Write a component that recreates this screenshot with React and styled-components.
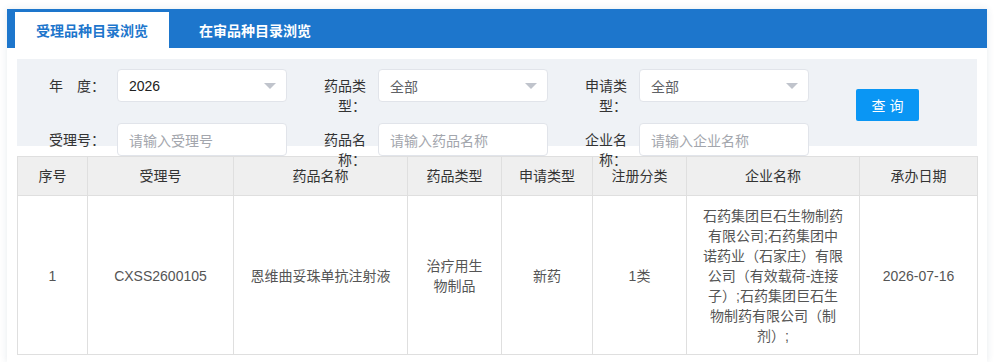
import React from "react";
import styled, { createGlobalStyle } from "styled-components";

const GlobalStyle = createGlobalStyle`
  html, body {
    margin: 0;
    padding: 0;
    background: #ffffff;
  }
  body {
    font-family: "Liberation Sans", "Noto Sans CJK SC", sans-serif;
    font-size: 14px;
    color: #333;
  }
`;

const BLUE = "#1d76cc";

const Panel = styled.div`
  width: 980px;
  height: calc(100vh - 9px);
  margin: 9px 0 0 7px;
  background: #fff;
  box-shadow: 0 0 7px rgba(40, 70, 110, 0.12);
`;

const TabBar = styled.div`
  display: flex;
  height: 39px;
  padding: 3px 0 0 8px;
  box-sizing: border-box;
  background: ${BLUE};
`;

const Tab = styled.div`
  width: 154px;
  height: 36px;
  margin-left: ${(p) => (p.$first ? 0 : 10)}px;
  display: flex;
  align-items: center;
  justify-content: ${(p) => (p.$active ? "center" : "flex-start")};
  padding-left: ${(p) => (p.$active ? 0 : 20)}px;
  box-sizing: border-box;
  font-family: "Noto Sans CJK SC", sans-serif;
  font-size: 14px;
  font-weight: bold;
  color: ${(p) => (p.$active ? BLUE : "#fff")};
  background: ${(p) => (p.$active ? "#fff" : "transparent")};
`;

const Body = styled.div`
  padding: 11px 10px 0;
`;

const Filter = styled.div`
  height: 87px;
  padding-top: 10px;
  box-sizing: border-box;
  background: #eff2f6;
`;

const Row = styled.div`
  display: flex;
  align-items: flex-start;
  height: ${(p) => p.$h}px;
`;

const Field = styled.div`
  display: flex;
  align-items: flex-start;
  margin-left: ${(p) => p.$gap || 0}px;
`;

const Label = styled.div`
  width: ${(p) => p.$w}px;
  box-sizing: border-box;
  padding: 7px 12px 0 0;
  text-align: right;
  line-height: 20px;
  font-size: 14px;
  color: #333;
`;

const Box = styled.div`
  position: relative;
  width: 170px;
  height: 33px;
  box-sizing: border-box;
  padding-left: 11px;
  display: flex;
  align-items: center;
  background: #fff;
  border: 1px solid #e1e4ea;
  border-radius: 4px;
  font-size: 14px;
  color: ${(p) => (p.$placeholder ? "#a3a6ad" : p.$muted ? "#606266" : "#222")};
`;

const Caret = styled.span`
  position: absolute;
  right: 10px;
  top: 13px;
  width: 0;
  height: 0;
  border-left: 6px solid transparent;
  border-right: 6px solid transparent;
  border-top: 6px solid #c0c4cc;
`;

const Button = styled.button`
  width: 63px;
  height: 32px;
  margin: 20px 0 0 47px;
  padding: 0;
  border: none;
  border-radius: 2px;
  background: #0a96f4;
  color: #fff;
  font-family: "Liberation Sans", "Noto Sans CJK SC", sans-serif;
  font-size: 14px;
`;

const Table = styled.table`
  width: 960px;
  margin-top: 10px;
  border-collapse: collapse;
  table-layout: fixed;
  font-size: 14px;
`;

const Th = styled.th`
  height: 38px;
  padding: 0 12px;
  font-weight: normal;
  color: #333;
  background: #efefef;
  border: 1px solid #dfdfdf;
  line-height: 20px;
`;

const Td = styled.td`
  padding: 10px 12px 8px;
  text-align: center;
  vertical-align: middle;
  color: #555;
  border: 1px solid #dfdfdf;
  line-height: 20px;
`;

const Wrap = styled.div`
  width: 141px;
  margin: 0 auto;
`;

const cols = [70, 146, 174, 94, 91, 94, 173, 118];
const heads = ["序号", "受理号", "药品名称", "药品类型", "申请类型", "注册分类", "企业名称", "承办日期"];

const Select = ({ value, muted }) => (
  <Box $muted={muted}>
    {value}
    <Caret />
  </Box>
);

export default function App() {
  return (
    <>
      <GlobalStyle />
      <Panel>
        <TabBar>
          <Tab $first $active>受理品种目录浏览</Tab>
          <Tab>在审品种目录浏览</Tab>
        </TabBar>
        <Body>
          <Filter>
            <Row $h={54}>
              <Field>
                <Label $w={100}>年　度：</Label>
                <Select value="2026" />
              </Field>
              <Field $gap={31}>
                <Label $w={60}>药品类型：</Label>
                <Select value="全部" muted />
              </Field>
              <Field $gap={31}>
                <Label $w={60}>申请类型：</Label>
                <Select value="全部" muted />
              </Field>
              <Button>查 询</Button>
            </Row>
            <Row $h={33}>
              <Field>
                <Label $w={100}>受理号：</Label>
                <Box $placeholder>请输入受理号</Box>
              </Field>
              <Field $gap={31}>
                <Label $w={60}>药品名称：</Label>
                <Box $placeholder>请输入药品名称</Box>
              </Field>
              <Field $gap={31}>
                <Label $w={60}>企业名称：</Label>
                <Box $placeholder>请输入企业名称</Box>
              </Field>
            </Row>
          </Filter>
          <Table>
            <colgroup>
              {cols.map((w, i) => (
                <col key={i} style={{ width: w }} />
              ))}
            </colgroup>
            <thead>
              <tr>
                {heads.map((h) => (
                  <Th key={h}>{h}</Th>
                ))}
              </tr>
            </thead>
            <tbody>
              <tr>
                <Td>1</Td>
                <Td>CXSS2600105</Td>
                <Td>恩维曲妥珠单抗注射液</Td>
                <Td>治疗用生物制品</Td>
                <Td>新药</Td>
                <Td>1类</Td>
                <Td>
                  <Wrap>
                    石药集团巨石生物制药有限公司;石药集团中诺药业（石家庄）有限公司（有效载荷-连接子）;石药集团巨石生物制药有限公司（制剂）;
                  </Wrap>
                </Td>
                <Td>2026-07-16</Td>
              </tr>
            </tbody>
          </Table>
        </Body>
      </Panel>
    </>
  );
}
